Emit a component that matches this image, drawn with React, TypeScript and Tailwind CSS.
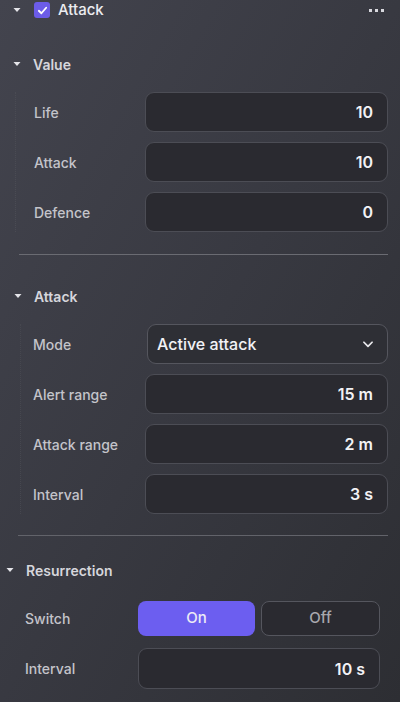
import React from "react";

const Caret = () => (
  <svg className="h-[6px] w-[8px]" viewBox="0 0 8 6">
    <path d="M0.5 1H7.5L4 5Z" fill="#e5e5ea" />
  </svg>
);

const Field = ({ label, value }: { label: string; value: string }) => (
  <div className="flex items-center">
    <span className="flex-1 text-[14px] font-medium text-[#c4c4ca]">{label}</span>
    <div className="flex h-[40px] w-[243px] items-center justify-end rounded-[9px] border border-[#4c4d55] bg-[#2a2a30] px-[14px] text-[16px] font-semibold text-[#f2f2f5]">
      {value}
    </div>
  </div>
);

const SectionHead = ({ title }: { title: string }) => (
  <div className="flex h-[20px] items-center gap-[12px]">
    <Caret />
    <span className="text-[14px] font-semibold text-[#d6d6dc]">{title}</span>
  </div>
);

export default function App() {
  return (
    <div
      className="h-[702px] w-[400px] overflow-hidden bg-gradient-to-br from-[#43444e] via-[#383941] to-[#2d2e33]"
      style={{ fontFamily: "Inter, 'Noto Sans', sans-serif" }}
    >
      {/* component header */}
      <div className="flex h-[20px] items-center pl-[13px] pr-[16px]">
        <Caret />
        <div className="ml-[13px] flex h-[16px] w-[16px] items-center justify-center rounded-[3px] bg-[#6c5ce8]">
          <svg className="h-[11px] w-[11px]" viewBox="0 0 12 12" fill="none">
            <path d="M2 6.3L4.8 9L10 3" stroke="white" strokeWidth="2" strokeLinecap="round" strokeLinejoin="round" />
          </svg>
        </div>
        <span className="ml-[8px] text-[15px] font-medium text-[#ececf0]">Attack</span>
        <div className="ml-auto flex gap-[3px]">
          <span className="h-[3px] w-[3px] bg-[#d8d8de]" />
          <span className="h-[3px] w-[3px] bg-[#d8d8de]" />
          <span className="h-[3px] w-[3px] bg-[#d8d8de]" />
        </div>
      </div>

      {/* Value */}
      <div className="mt-[34px] pl-[13px] pr-[12px]">
        <SectionHead title="Value" />
        <div className="ml-[2px] mt-[18px] flex flex-col gap-[10px] border-l border-dotted border-[#4a4b53] pl-[18px]">
          <Field label="Life" value="10" />
          <Field label="Attack" value="10" />
          <Field label="Defence" value="0" />
        </div>
        <div className="ml-[6px] mt-[22px] h-px bg-[#6a6b72]" />
      </div>

      {/* Attack */}
      <div className="mt-[31px] pl-[14px] pr-[12px]">
        <SectionHead title="Attack" />
        <div className="ml-[6px] mt-[18px] flex flex-col gap-[10px] border-l border-dotted border-[#46474f] pl-[12px]">
          <div className="flex items-center">
            <span className="flex-1 text-[14px] font-medium text-[#c4c4ca]">Mode</span>
            <div className="flex h-[40px] w-[241px] items-center justify-between rounded-[9px] border border-[#55565e] bg-[#2e2f35] pl-[9px] pr-[12px] text-[16px] font-medium text-[#f2f2f5]">
              Active attack
              <svg className="h-[14px] w-[14px]" viewBox="0 0 24 24" fill="none">
                <path d="M5 9L12 16L19 9" stroke="#e8e8ec" strokeWidth="3" strokeLinecap="round" strokeLinejoin="round" />
              </svg>
            </div>
          </div>
          <Field label="Alert range" value="15 m" />
          <Field label="Attack range" value="2 m" />
          <Field label="Interval" value="3 s" />
        </div>
        <div className="ml-[4px] mt-[21px] h-px bg-[#62636a]" />
      </div>

      {/* Resurrection */}
      <div className="mt-[24px] pl-[6px] pr-[20px]">
        <SectionHead title="Resurrection" />
        <div className="ml-[19px] mt-[21px] flex flex-col gap-[12px]">
          <div className="flex items-center">
            <span className="flex-1 text-[14px] font-medium text-[#c4c4ca]">Switch</span>
            <div className="flex w-[242px] gap-[6px]">
              <div className="flex h-[35px] flex-1 items-center justify-center rounded-[8px] bg-[#6c5ef0] text-[15px] font-medium text-[#ececf5]">
                On
              </div>
              <div className="flex h-[35px] flex-1 items-center justify-center rounded-[8px] border border-[#55565e] bg-[#2a2a30] text-[15px] font-medium text-[#a8a8ae]">
                Off
              </div>
            </div>
          </div>
          <div className="flex items-center">
            <span className="flex-1 text-[14px] font-medium text-[#c4c4ca]">Interval</span>
            <div className="flex h-[41px] w-[242px] items-center justify-end rounded-[9px] border border-[#4c4d55] bg-[#2a2a30] px-[14px] text-[16px] font-semibold text-[#f2f2f5]">
              10 s
            </div>
          </div>
        </div>
      </div>
    </div>
  );
}
